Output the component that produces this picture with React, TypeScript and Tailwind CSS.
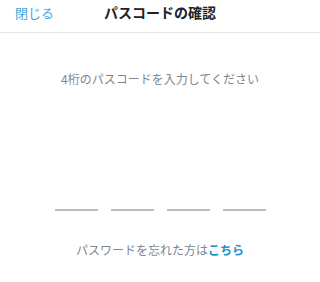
export default function App() {
  return (
    <div className="w-[320px] h-[282px] bg-white flex flex-col" style={{ fontFamily: '"Noto Sans CJK JP", "Noto Sans", sans-serif' }}>
      {/* ヘッダー */}
      <div className="relative h-[33px] border-b border-[#e6e6e6] flex items-center justify-center">
        <button className="absolute left-[15px] top-[3px] text-[13px] leading-[20px] text-[#45a8d9]">閉じる</button>
        <h1 className="text-[14px] leading-[20px] font-bold text-[#222] -mt-[8px]">パスコードの確認</h1>
      </div>

      {/* 説明 */}
      <p className="mt-[37px] text-center text-[12px] leading-[18px] text-[#7d8790]">4桁のパスコードを入力してください</p>

      {/* 入力欄 */}
      <div className="mt-[121px] flex justify-center gap-[13px]">
        {[0, 1, 2, 3].map((i) => (
          <div key={i} className="w-[43px] h-[2px] bg-[#b4bcc4]" />
        ))}
      </div>

      <p className="mt-[30px] text-center text-[12px] leading-[18px] text-[#7d8790]">
        パスワードを忘れた方は<span className="font-bold text-[#1a8fd0]">こちら</span>
      </p>
    </div>
  );
}
